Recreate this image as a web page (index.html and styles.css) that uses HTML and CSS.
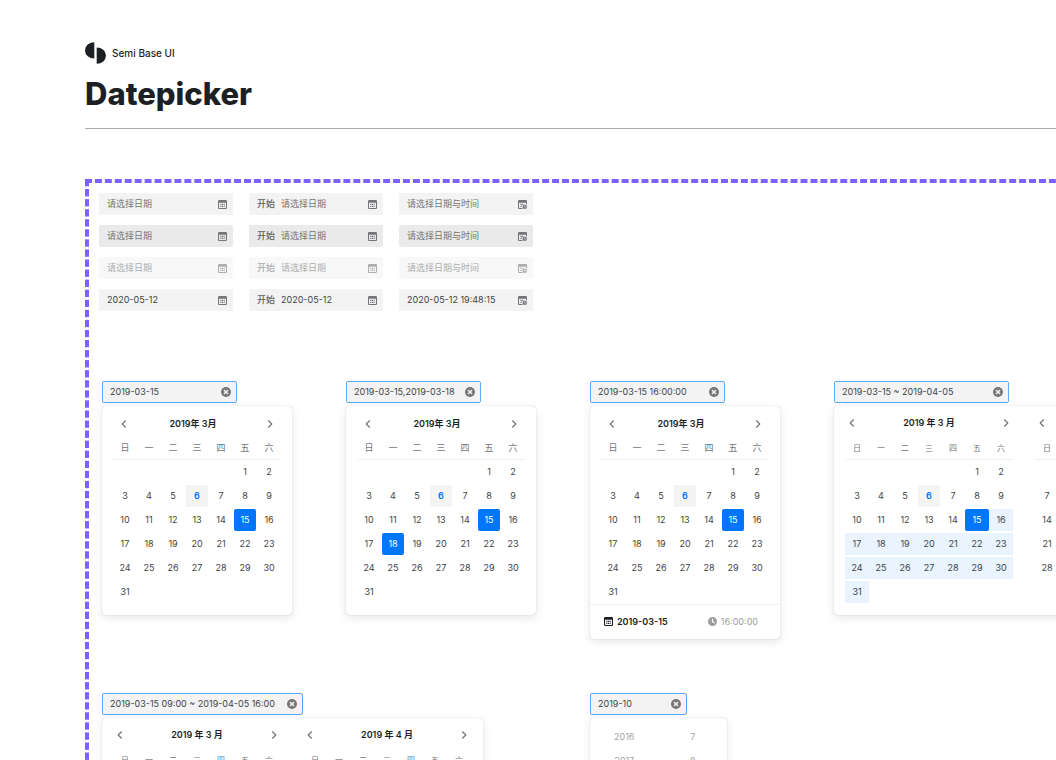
FILE: index.html
```
<!DOCTYPE html>
<html lang="zh-CN">

<head>
    <meta charset="UTF-8">
    <meta name="viewport" content="width=device-width, initial-scale=1.0">
    <title>Datepicker</title>
    <link rel="stylesheet" href="styles.css">
</head>

<body>
    <!-- 图标 -->
    <svg class="sprite" aria-hidden="true">
        <symbol id="i-calendar" viewBox="0 0 16 16">
            <path fill-rule="evenodd" d="M2 0h12a2 2 0 0 1 2 2v12a2 2 0 0 1-2 2H2a2 2 0 0 1-2-2V2a2 2 0 0 1 2-2zM1.8 5v8.2a1 1 0 0 0 1 1h10.4a1 1 0 0 0 1-1V5z" />
            <path d="M4 6.8h2v2H4zM7 6.8h2v2H7zM10 6.8h2v2h-2zM4 10.4h2v2H4zM7 10.4h2v2H7zM10 10.4h2v2h-2z" />
        </symbol>
        <symbol id="i-calendar-time" viewBox="0 0 16 16">
            <path d="M2 0h12a2 2 0 0 1 2 2v5h-1.8V5H1.8v8.2a1 1 0 0 0 1 1H8V16H2a2 2 0 0 1-2-2V2a2 2 0 0 1 2-2z" />
            <path d="M4 6.8h5v1.5H4zM4 10.4h3v1.5H4z" />
            <path fill-rule="evenodd" d="M12 8a4 4 0 1 1 0 8 4 4 0 0 1 0-8zM11.4 9.6v3.2h2.8v-1.2h-1.6v-2z" />
        </symbol>
        <symbol id="i-clear" viewBox="0 0 16 16">
            <path fill-rule="evenodd" d="M8 0a8 8 0 1 1 0 16A8 8 0 0 1 8 0zM5.5 3.9 3.9 5.5 6.4 8l-2.5 2.5 1.6 1.6L8 9.6l2.5 2.5 1.6-1.6L9.6 8l2.5-2.5-1.6-1.6L8 6.4z" />
        </symbol>
        <symbol id="i-clock" viewBox="0 0 16 16">
            <path fill-rule="evenodd" d="M8 0a8 8 0 1 1 0 16A8 8 0 0 1 8 0zM7 3v6l4.5 2.7 1-1.7L9 7.9V3z" />
        </symbol>
        <symbol id="i-left" viewBox="0 0 10 10">
            <path d="M6.5 1.8 3.2 5l3.3 3.2" fill="none" stroke="currentColor" stroke-width="1.2" stroke-linecap="round" stroke-linejoin="round" />
        </symbol>
        <symbol id="i-right" viewBox="0 0 10 10">
            <path d="M3.5 1.8 6.8 5 3.5 8.2" fill="none" stroke="currentColor" stroke-width="1.2" stroke-linecap="round" stroke-linejoin="round" />
        </symbol>
    </svg>

    <header class="header">
        <div class="brand">
            <svg class="logo" viewBox="0 0 21 22" aria-hidden="true">
                <path d="M9.3 0.2v16.4A9.3 8.2 0 0 1 9.3 0.2zM11.7 5.4a9.3 8.2 0 0 1 0 16.4z" />
            </svg>
            <span>Semi Base UI</span>
        </div>
        <h1 class="title">Datepicker</h1>
    </header>

    <main class="board">
        <!-- 输入框状态: 默认 / 悬停 / 禁用 / 已选择 -->
        <div class="states">
            <label class="field">
                <input type="text" placeholder="请选择日期" aria-label="日期">
                <svg class="icon"><use href="#i-calendar" /></svg>
            </label>
            <label class="field">
                <span class="prefix">开始</span>
                <input type="text" placeholder="请选择日期">
                <svg class="icon"><use href="#i-calendar" /></svg>
            </label>
            <label class="field">
                <input type="text" placeholder="请选择日期与时间" aria-label="日期与时间">
                <svg class="icon"><use href="#i-calendar-time" /></svg>
            </label>

            <label class="field hover">
                <input type="text" placeholder="请选择日期" aria-label="日期">
                <svg class="icon"><use href="#i-calendar" /></svg>
            </label>
            <label class="field hover">
                <span class="prefix">开始</span>
                <input type="text" placeholder="请选择日期">
                <svg class="icon"><use href="#i-calendar" /></svg>
            </label>
            <label class="field hover">
                <input type="text" placeholder="请选择日期与时间" aria-label="日期与时间">
                <svg class="icon"><use href="#i-calendar-time" /></svg>
            </label>

            <label class="field disabled">
                <input type="text" placeholder="请选择日期" aria-label="日期" disabled>
                <svg class="icon"><use href="#i-calendar" /></svg>
            </label>
            <label class="field disabled">
                <span class="prefix">开始</span>
                <input type="text" placeholder="请选择日期" disabled>
                <svg class="icon"><use href="#i-calendar" /></svg>
            </label>
            <label class="field disabled">
                <input type="text" placeholder="请选择日期与时间" aria-label="日期与时间" disabled>
                <svg class="icon"><use href="#i-calendar-time" /></svg>
            </label>

            <label class="field">
                <input type="text" value="2020-05-12" aria-label="日期">
                <svg class="icon"><use href="#i-calendar" /></svg>
            </label>
            <label class="field">
                <span class="prefix">开始</span>
                <input type="text" value="2020-05-12">
                <svg class="icon"><use href="#i-calendar" /></svg>
            </label>
            <label class="field">
                <input type="text" value="2020-05-12 19:48:15" aria-label="日期与时间">
                <svg class="icon"><use href="#i-calendar-time" /></svg>
            </label>
        </div>

        <div class="pickers">
            <!-- 单选 -->
            <section class="picker">
                <div class="field active">
                    <input type="text" value="2019-03-15" aria-label="日期">
                    <button class="clear" aria-label="清除"><svg class="icon"><use href="#i-clear" /></svg></button>
                </div>
                <div class="panel">
                    <div class="months">
                        <div class="month" data-title="2019年 3月" data-start="5" data-days="31" data-today="6" data-selected="15"></div>
                    </div>
                </div>
            </section>

            <!-- 多选 -->
            <section class="picker">
                <div class="field active">
                    <input type="text" value="2019-03-15,2019-03-18" aria-label="多个日期">
                    <button class="clear" aria-label="清除"><svg class="icon"><use href="#i-clear" /></svg></button>
                </div>
                <div class="panel">
                    <div class="months">
                        <div class="month" data-title="2019年 3月" data-start="5" data-days="31" data-today="6" data-selected="15,18"></div>
                    </div>
                </div>
            </section>

            <!-- 日期时间 -->
            <section class="picker">
                <div class="field active">
                    <input type="text" value="2019-03-15 16:00:00" aria-label="日期与时间">
                    <button class="clear" aria-label="清除"><svg class="icon"><use href="#i-clear" /></svg></button>
                </div>
                <div class="panel with-footer">
                    <div class="months">
                        <div class="month" data-title="2019年 3月" data-start="5" data-days="31" data-today="6" data-selected="15"></div>
                    </div>
                    <div class="footer">
                        <button class="switch current"><svg class="icon"><use href="#i-calendar" /></svg>2019-03-15</button>
                        <button class="switch"><svg class="icon"><use href="#i-clock" /></svg>16:00:00</button>
                    </div>
                </div>
            </section>

            <!-- 日期范围 -->
            <section class="picker">
                <div class="field active range">
                    <input type="text" value="2019-03-15 ~ 2019-04-05" aria-label="日期范围">
                    <button class="clear" aria-label="清除"><svg class="icon"><use href="#i-clear" /></svg></button>
                </div>
                <div class="panel double">
                    <div class="months">
                        <div class="month" data-title="2019 年 3 月" data-start="5" data-days="31" data-today="6" data-selected="15" data-range="16-31"></div>
                        <div class="month" data-title="2019 年 4 月" data-start="1" data-days="30" data-selected="5" data-range="1-4"></div>
                    </div>
                </div>
            </section>

            <!-- 日期时间范围 -->
            <section class="picker wide">
                <div class="field active range-time">
                    <input type="text" value="2019-03-15 09:00 ~ 2019-04-05 16:00" aria-label="日期时间范围">
                    <button class="clear" aria-label="清除"><svg class="icon"><use href="#i-clear" /></svg></button>
                </div>
                <div class="panel double">
                    <div class="months">
                        <div class="month" data-title="2019 年 3 月" data-start="5" data-days="31" data-today="6" data-selected="15" data-range="16-31"></div>
                        <div class="month" data-title="2019 年 4 月" data-start="1" data-days="30" data-selected="5" data-range="1-4"></div>
                    </div>
                </div>
            </section>

            <!-- 年月 -->
            <section class="picker">
                <div class="field active year-month">
                    <input type="text" value="2019-10" aria-label="年月">
                    <button class="clear" aria-label="清除"><svg class="icon"><use href="#i-clear" /></svg></button>
                </div>
                <div class="panel scroll">
                    <ul>
                        <li>2016</li>
                        <li>2017</li>
                    </ul>
                    <ul>
                        <li>7</li>
                        <li>8</li>
                    </ul>
                </div>
            </section>
        </div>
    </main>

    <script src="script.js"></script>
</body>

</html>
```

FILE: styles.css
```
:root {
    --text-0: #1c1f23;
    --text-1: #404346;
    --text-2: #737578;
    --text-3: #abadaf;
    --fill: #f3f3f3;
    --fill-hover: #eaeaea;
    --primary: #0077fa;
    --primary-light: #e9f4ff;
    --board: #7b61ff;
}

* {
    box-sizing: border-box;
}

body {
    display: flex;
    flex-direction: column;
    height: 100vh;
    margin: 0;
    padding: 42px 0 0 85px;
    overflow: hidden;
    background: #fff;
    color: var(--text-1);
    font-family: Inter, "Noto Sans CJK SC", sans-serif;
    font-size: 9px;
    line-height: 12px;
}

input,
button {
    margin: 0;
    padding: 0;
    border: 0;
    background: none;
    color: inherit;
    font: inherit;
}

ul {
    margin: 0;
    padding: 0;
    list-style: none;
}

.sprite {
    position: absolute;
    width: 0;
    height: 0;
}

.icon {
    display: block;
    flex: none;
    width: 9px;
    height: 9px;
    fill: currentColor;
}

/* 页头 */
.header {
    height: 87px;
    border-bottom: 1px solid #aaa;
}

.brand {
    display: flex;
    align-items: center;
    gap: 6px;
    color: var(--text-0);
    font-size: 10px;
    font-weight: 500;
}

.logo {
    width: 21px;
    height: 22px;
    fill: var(--text-0);
}

.title {
    margin: 10px 0 0;
    color: var(--text-0);
    font-size: 31px;
    font-weight: 800;
    line-height: 40px;
}

/* 紫色虚线画板 */
.board {
    flex: 1;
    min-height: 0;
    margin: 50px -4px -3px 0;
    padding: 14px 0 0 14px;
    background-image:
        linear-gradient(90deg, var(--board) 70%, transparent 70%),
        linear-gradient(var(--board) 70%, transparent 70%);
    background-size: 10px 4px, 4px 10px;
    background-repeat: round no-repeat, no-repeat round;
}

/* 输入框 */
.states {
    display: grid;
    grid-template-columns: repeat(3, 134px);
    gap: 10px 16px;
}

.field {
    display: flex;
    align-items: center;
    height: 22px;
    padding: 0 6px 0 8px;
    border-radius: 2px;
    background: var(--fill);
}

.field input {
    flex: 1;
    min-width: 0;
    outline: none;
}

.field input::placeholder {
    color: var(--text-2);
    opacity: 1;
}

.field .icon {
    color: var(--text-2);
}

.prefix {
    margin-right: 6px;
    color: #5c5f62;
    font-weight: 500;
}

.hover {
    background: var(--fill-hover);
}

.disabled {
    background: #f8f8f8;
}

.disabled .prefix,
.disabled .icon,
.disabled input::placeholder {
    color: var(--text-3);
}

.active {
    width: 135px;
    padding: 0 5px 0 7px;
    border: 1px solid #5aabff;
}

.active .icon {
    width: 10px;
    height: 10px;
}

.range {
    width: 175px;
}

.range-time {
    width: 201px;
}

.year-month {
    width: 97px;
}

/* 选择器 */
.pickers {
    display: grid;
    grid-template-columns: repeat(4, 244px);
    align-items: start;
    row-gap: 54px;
    margin: 70px 0 0 3px;
}

.wide {
    grid-column: span 2;
}

.panel {
    width: 190px;
    margin-top: 3px;
    padding: 6px 11px 11px;
    border-radius: 4px;
    background: #fff;
    box-shadow: 0 0 1px rgba(0, 0, 0, .3), 0 3px 10px rgba(0, 0, 0, .1);
}

.with-footer {
    padding-bottom: 0;
}

.months {
    display: flex;
    gap: 22px;
}

.month {
    width: 168px;
}

.month-head {
    display: flex;
    align-items: center;
    justify-content: space-between;
    height: 24px;
    padding: 0 6px;
    color: var(--text-0);
    font-weight: 600;
}

.month-head span {
    padding-right: 8px;
}

.month-head .icon {
    width: 10px;
    height: 10px;
    color: var(--text-2);
}

.days {
    width: 100%;
    table-layout: fixed;
    border-collapse: collapse;
}

.days th {
    height: 23px;
    padding: 2px 0 0;
    border-bottom: 1px solid #f0f0f0;
    color: var(--text-2);
    font-weight: 400;
}

.days td {
    height: 24px;
    padding: 1px 0;
}

.day {
    display: block;
    width: 22px;
    height: 22px;
    margin: 0 auto;
    border-radius: 2px;
}

.today {
    background: #f4f4f4;
    color: var(--primary);
    font-weight: 600;
}

.selected {
    background: var(--primary);
    color: #fff;
}

.in-range {
    width: 100%;
    border-radius: 0;
    background: var(--primary-light);
}

/* 双月面板 */
.double {
    width: 381px;
}

.double .month-head {
    height: 22px;
    margin-bottom: 2px;
    padding: 0 2px;
}

.double .month-head span {
    padding-right: 0;
}

.double .days th {
    font-size: 8px;
}

.double .selected {
    width: 100%;
}

.footer {
    display: flex;
    align-items: center;
    justify-content: space-between;
    height: 35px;
    margin: 0 -11px;
    padding: 0 22px 0 14px;
    border-top: 1px solid #f0f0f0;
}

.switch {
    display: flex;
    align-items: center;
    gap: 4px;
    color: #9b9d9f;
}

.current {
    color: var(--text-0);
    font-weight: 600;
}

/* 年月滚动面板 */
.scroll {
    display: flex;
    width: 137px;
    padding: 7px 0;
}

.scroll ul {
    flex: 1;
    text-align: center;
}

.scroll li {
    color: #a4a5a7;
    line-height: 24px;
}
```

FILE: script.js
```
const weekdays = ['日', '一', '二', '三', '四', '五', '六'];

function renderMonth(el) {
    const { title, start, days, today, selected, range } = el.dataset;
    const picked = selected.split(',').map(Number);
    const [from, to] = (range || '0-0').split('-').map(Number);
    const total = Number(days);
    let day = 1 - Number(start);
    let rows = '';

    while (day <= total) {
        rows += '<tr>';
        for (let i = 0; i < 7; i++, day++) {
            if (day < 1 || day > total) {
                rows += '<td></td>';
                continue;
            }
            let cls = 'day';
            if (day === Number(today)) cls += ' today';
            if (picked.includes(day)) cls += ' selected';
            if (day >= from && day <= to) cls += ' in-range';
            rows += `<td><button class="${cls}">${day}</button></td>`;
        }
        rows += '</tr>';
    }

    el.innerHTML = `
        <div class="month-head">
            <button aria-label="上个月"><svg class="icon"><use href="#i-left" /></svg></button>
            <span>${title}</span>
            <button aria-label="下个月"><svg class="icon"><use href="#i-right" /></svg></button>
        </div>
        <table class="days">
            <thead><tr>${weekdays.map(d => `<th scope="col">${d}</th>`).join('')}</tr></thead>
            <tbody>${rows}</tbody>
        </table>`;
}

document.querySelectorAll('.month').forEach(renderMonth);
```
